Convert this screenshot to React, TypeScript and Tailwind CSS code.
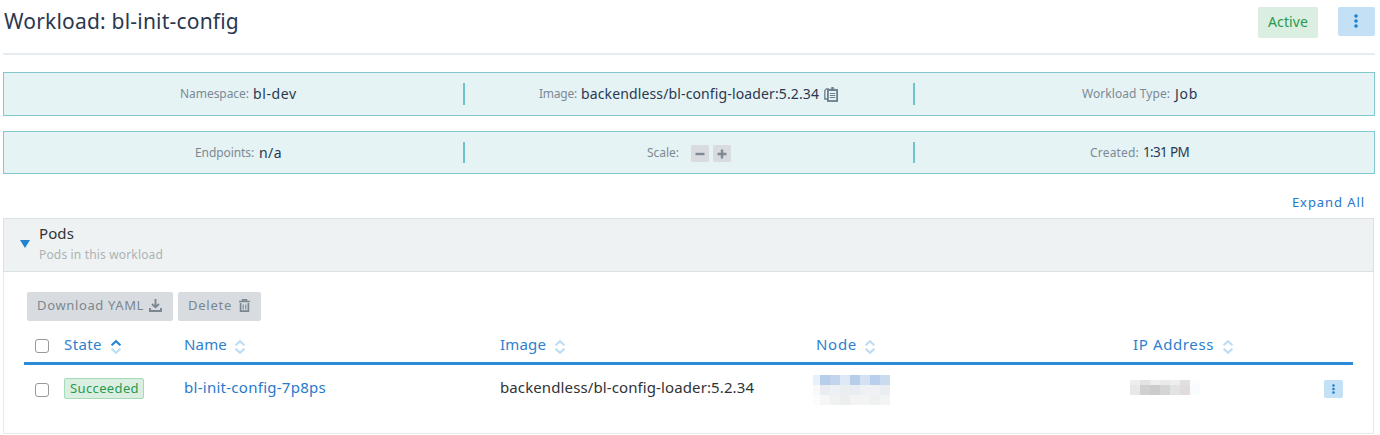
import React from "react";

function Dots({ className }: { className: string }) {
  return (
    <svg viewBox="0 0 4 14" className={className} fill="#1b80ce">
      <circle cx="2" cy="2" r="1.8" />
      <circle cx="2" cy="7" r="1.8" />
      <circle cx="2" cy="12" r="1.8" />
    </svg>
  );
}

function Sort({ active = false }: { active?: boolean }) {
  return (
    <svg viewBox="0 0 12 16" className="mt-[5px] h-4 w-3 shrink-0" fill="none" strokeWidth="2.1">
      <path d="M1.6 6.3 L6 2.2 L10.4 6.3" stroke={active ? "#2385d3" : "#bddcf4"} />
      <path d="M1.6 9.7 L6 13.8 L10.4 9.7" stroke="#bddcf4" />
    </svg>
  );
}

function Clipboard() {
  return (
    <svg viewBox="0 0 14 15" className="h-[15px] w-[14px] shrink-0" fill="none" stroke="#6c7f8d">
      <path d="M4 12 H.8 V3.6 L2.5 1.8 H5" strokeWidth="1.3" />
      <rect x="3.9" y="3" width="9.2" height="11" strokeWidth="1.8" fill="#e5f3f5" />
      <path d="M5.5 2.7 H11.5 M7.3 1 H9.7" strokeWidth="2" />
      <path d="M5.8 6.5 H11.3 M5.8 8.5 H11.3 M5.8 10.5 H11.3" strokeWidth="1" />
    </svg>
  );
}

function Divider() {
  return <div className="w-0.5 shrink-0 bg-[#6fc4c9]" />;
}

const nodeTiles = [
  ["bg-[#e8f0f9]", "bg-[#b7ceeb]", "bg-[#c2d5ee]", "bg-[#dfe9f5]", "bg-[#b7ceeb]", "bg-[#d4e1f2]", "bg-[#bacfeb]", "bg-[#c8dbef]"],
  ["bg-[#f9f9f9]", "bg-[#e9edf1]", "bg-[#edf1f6]", "bg-[#ebeef1]", "bg-[#e9edf1]", "bg-[#eff1f4]", "bg-[#eff1f4]", "bg-[#eaeef2]"],
  ["bg-[#fcfcfc]", "bg-[#f5f6f5]", "bg-[#f0f1f1]", "bg-[#ecedef]", "bg-[#f2f3f2]", "bg-[#f2f3f3]", "bg-[#eff0f2]", "bg-[#f3f4f4]"],
];

const ipTiles = [
  ["bg-[#eeeeec]", "bg-[#e3e3e4]", "bg-[#eeeeef]", "bg-[#eaeaea]", "bg-[#eeeeef]", "bg-[#e1e0df]", "bg-[#fcfdff]"],
  ["bg-[#e8e8e6]", "bg-[#d0d0d3]", "bg-[#cccccc]", "bg-[#d5d5d3]", "bg-[#e3e3e4]", "bg-[#e0dcdb]", "bg-[#f8fcff]"],
];

export default function App() {
  return (
    <div className="flex h-[435px] w-[1380px] flex-col overflow-hidden bg-white pl-[3px] pr-[5px] font-['Noto_Sans',sans-serif] whitespace-nowrap text-[#2b3850]">
      <header className="flex h-[55px] shrink-0 items-start border-b-2 border-[#e6ecef] pt-[7px]">
        <h1 className="h-[28px] flex-1 pl-px text-[21px] leading-[28px] tracking-[0.2px]">Workload: bl-init-config</h1>
        <div className="h-[31px] w-[60px] rounded-xs bg-[#daefe2] text-center text-[14px] leading-[30px] tracking-[0.1px] text-[#27994e]">Active</div>
        <button className="ml-5 flex h-[29px] w-[37px] justify-center rounded-xs bg-[#c4e0f5] pt-[7px] pr-px">
          <Dots className="h-[14px] w-1" />
        </button>
      </header>

      <section className="mt-[17px] flex h-11 shrink-0 border border-[#82c9cd] bg-[#e5f3f5] py-[10px] text-[14px] leading-[21px]">
        <div className="flex w-[459px] items-start pl-[176px]">
          <span className="w-[73px] text-[12px] tracking-[-0.05px] text-[#7c8994]">Namespace:</span>
          <span className="tracking-[0.6px]">bl-dev</span>
        </div>
        <Divider />
        <div className="flex w-[448px] items-start pl-[74px]">
          <span className="w-[42px] text-[12px] tracking-[-0.23px] text-[#7c8994]">Image:</span>
          <span className="w-[243px] tracking-[0.13px]">backendless/bl-config-loader:5.2.34</span>
          <span className="pt-[4px]"><Clipboard /></span>
        </div>
        <Divider />
        <div className="flex flex-1 items-start pl-[167px]">
          <span className="w-[93px] text-[12px] tracking-[0.07px] text-[#7c8994]">Workload Type:</span>
          <span className="tracking-[0.7px]">Job</span>
        </div>
      </section>

      <section className="mt-[15px] flex h-[43px] shrink-0 border border-[#82c9cd] bg-[#e5f3f5] py-[10px] text-[14px] leading-[21px]">
        <div className="flex w-[459px] items-start pl-[191px]">
          <span className="w-16 text-[12px] tracking-[-0.09px] text-[#7c8994]">Endpoints:</span>
          <span className="tracking-[0.43px]">n/a</span>
        </div>
        <Divider />
        <div className="flex w-[448px] items-start pl-[182px]">
          <span className="w-11 text-[12px] tracking-[-0.03px] text-[#7c8994]">Scale:</span>
          <button className="mt-[3px] flex h-[17px] w-[18px] items-center justify-center rounded-xs bg-[#d8dbe0]">
            <svg viewBox="0 0 10 10" className="size-[10px]"><path d="M.5 5 H9.5" stroke="#7e8993" strokeWidth="2.4" /></svg>
          </button>
          <button className="mt-[3px] ml-1 flex h-[17px] w-[18px] items-center justify-center rounded-xs bg-[#d8dbe0]">
            <svg viewBox="0 0 10 10" className="size-[10px]"><path d="M.5 5 H9.5 M5 .5 V9.5" stroke="#7e8993" strokeWidth="2.4" /></svg>
          </button>
        </div>
        <Divider />
        <div className="flex flex-1 items-start pl-[175px]">
          <span className="w-[53px] text-[12px] tracking-[0.19px] text-[#7c8994]">Created:</span>
          <span className="text-[13.5px] tracking-[-0.68px]">1:31 PM</span>
        </div>
      </section>

      <div className="flex h-11 shrink-0 justify-end pt-[18px] pr-[10px] text-[13px] leading-5 tracking-[0.92px] text-[#2677c9]">
        <a>Expand All</a>
      </div>

      <main className="mr-px flex h-[216px] shrink-0 flex-col border border-[#e9eaea]">
        <div className="-mx-px -mt-px flex h-[54px] shrink-0 items-start border border-[#d9e1e1] bg-[#eef2f3] pl-4">
          <svg viewBox="0 0 10 8" className="mt-[21px] h-2 w-[10px]"><path d="M0 0 H10 L5 8 Z" fill="#2182d0" /></svg>
          <div className="flex flex-col pt-[4px] pl-[9px]">
            <h2 className="h-[21px] text-[15px] leading-5 tracking-[0.1px] text-[#303336]">Pods</h2>
            <p className="h-5 text-[12px] leading-[21px] tracking-[0.16px] text-[#acb3b5]">Pods in this workload</p>
          </div>
        </div>

        <div className="mt-5 flex shrink-0 gap-[5px] pl-[23px] text-[13px] leading-[26px] text-[#7b8790]">
          <button className="flex h-[29px] w-[146px] items-start rounded-xs bg-[#d8dce0] pl-[10px]">
            <span className="w-[112px] text-left tracking-[0.64px]">Download YAML</span>
            <svg viewBox="0 0 13 13" className="mt-[7px] size-[13px] shrink-0" fill="none" stroke="#7b8790" strokeWidth="1.9">
              <path d="M6.5 0 V8 M3 5 L6.5 8.3 L10 5 M1 9 V12 H12 V9" />
            </svg>
          </button>
          <button className="flex h-[29px] w-[83px] items-start rounded-xs bg-[#d8dce0] pl-[10px]">
            <span className="w-[50.5px] text-left tracking-[0.74px]">Delete</span>
            <svg viewBox="0 0 11 13" className="mt-[7px] h-[13px] w-[11px] shrink-0" fill="none" stroke="#7b8790">
              <path d="M0 2.5 H11 M3.5 2 V.7 H7.5 V2" strokeWidth="1.5" />
              <path d="M1.6 4 V12.1 H9.4 V4" strokeWidth="1.7" />
              <path d="M4.2 5.5 V10.5 M6.8 5.5 V10.5" strokeWidth="1.1" />
            </svg>
          </button>
        </div>

        <div className="mr-5 ml-5 flex h-11 shrink-0 items-start border-b-[3px] border-[#2e8bd9] pt-[13px] text-[15px] leading-[21px] text-[#2e7fd0]">
          <div className="flex w-10 pl-[11px]"><input type="checkbox" className="mt-[5px] size-[14px] appearance-none rounded-[3px] border border-[#999] bg-white" /></div>
          <div className="flex w-[120px]"><span className="w-[46px] tracking-[0.41px]">State</span><Sort active /></div>
          <div className="flex w-[316px]"><span className="w-[50px] tracking-[0.17px]">Name</span><Sort /></div>
          <div className="flex w-[316px]"><span className="w-[54px] tracking-[0.16px]">Image</span><Sort /></div>
          <div className="flex w-[317px]"><span className="w-[48px] tracking-[0.71px]">Node</span><Sort /></div>
          <div className="flex flex-1"><span className="w-[89px] tracking-[0.62px]">IP Address</span><Sort /></div>
        </div>

        <div className="mr-5 ml-5 flex items-start text-[15px] leading-[21px]">
          <div className="flex w-10 pt-[18px] pl-[11px]"><input type="checkbox" className="size-[14px] appearance-none rounded-[3px] border border-[#999] bg-white" /></div>
          <div className="w-[120px] pt-[13px]">
            <div className="h-[21px] w-20 rounded-xs border border-[#a3dab7] bg-[#daefe2] pl-[5px] text-[13px] leading-[19px] tracking-[0.37px] text-[#27994e]">Succeeded</div>
          </div>
          <a className="w-[316px] pt-[12px] tracking-[0.27px] text-[#2879cc]">bl-init-config-7p8ps</a>
          <span className="w-[313px] pt-[12px] tracking-[0.11px] text-[#303336]">backendless/bl-config-loader:5.2.34</span>
          <div className="w-[317px] pt-[10px]">
            {nodeTiles.map((row, i) => (
              <div key={i} className="flex h-[10px]">
                {row.map((c, j) => <div key={j} className={`${j === 0 ? "w-[7px]" : "w-[10px]"} ${c}`} />)}
              </div>
            ))}
          </div>
          <div className="w-[194px] pt-[15px]">
            {ipTiles.map((row, i) => (
              <div key={i} className={`flex ${i === 0 ? "h-[5px]" : "h-[10px]"}`}>
                {row.map((c, j) => <div key={j} className={`w-[10px] ${c}`} />)}
              </div>
            ))}
          </div>
          <button className="mt-[15px] flex h-[18px] w-[19px] justify-center rounded-xs bg-[#c4e0f5] pt-[4px] pr-px">
            <Dots className="h-[10px] w-[3px]" />
          </button>
        </div>
      </main>
    </div>
  );
}
